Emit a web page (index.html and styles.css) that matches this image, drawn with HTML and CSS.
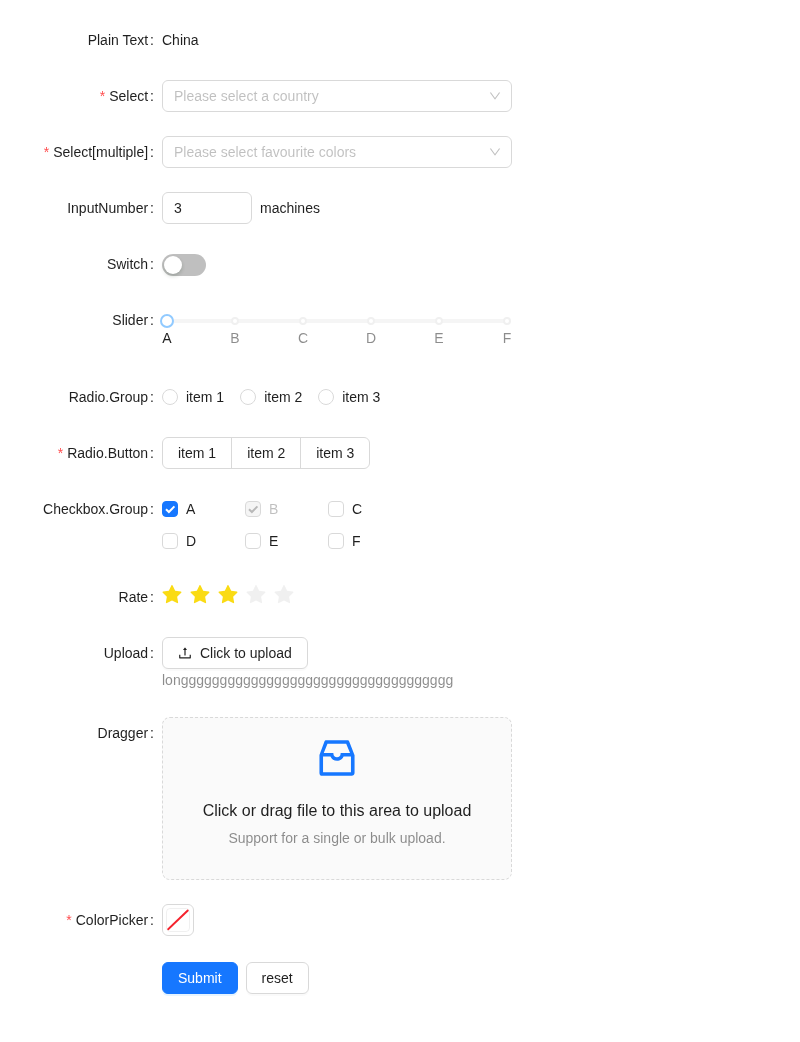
FILE: index.html
```html
<!DOCTYPE html>
<html lang="en">
<head>
<meta charset="utf-8">
<title>Form</title>
<link rel="stylesheet" href="styles.css">
</head>
<body>
<form class="form">
  <div class="row"><label class="label">Plain Text</label><div class="control"><span>China</span></div></div>

  <div class="row"><label class="label required">Select</label><div class="control">
    <div class="select"><span class="placeholder">Please select a country</span>
      <svg class="chev" viewBox="64 64 896 896"><path d="M884 256h-75c-5.1 0-9.9 2.5-12.9 6.6L512 654.2 227.9 262.6c-3-4.1-7.8-6.6-12.9-6.6h-75c-6.5 0-10.3 7.4-6.5 12.7l352.6 486.1c12.8 17.6 39 17.6 51.7 0l352.6-486.1c3.9-5.3.1-12.7-6.4-12.7z"/></svg></div>
  </div></div>

  <div class="row"><label class="label required">Select[multiple]</label><div class="control">
    <div class="select"><span class="placeholder">Please select favourite colors</span>
      <svg class="chev" viewBox="64 64 896 896"><path d="M884 256h-75c-5.1 0-9.9 2.5-12.9 6.6L512 654.2 227.9 262.6c-3-4.1-7.8-6.6-12.9-6.6h-75c-6.5 0-10.3 7.4-6.5 12.7l352.6 486.1c12.8 17.6 39 17.6 51.7 0l352.6-486.1c3.9-5.3.1-12.7-6.4-12.7z"/></svg></div>
  </div></div>

  <div class="row"><label class="label">InputNumber</label><div class="control gap8">
    <div class="number">3</div><span>machines</span>
  </div></div>

  <div class="row"><label class="label">Switch</label><div class="control">
    <div class="switch"><span class="knob"></span></div>
  </div></div>

  <div class="row slider-row"><label class="label">Slider</label><div class="control column">
    <div class="rail">
      <span class="handle"></span><span class="dot"></span><span class="dot"></span><span class="dot"></span><span class="dot"></span><span class="dot"></span>
    </div>
    <div class="marks">
      <span class="mark active">A</span><span class="mark">B</span><span class="mark">C</span><span class="mark">D</span><span class="mark">E</span><span class="mark">F</span>
    </div>
  </div></div>

  <div class="row"><label class="label">Radio.Group</label><div class="control">
    <span class="radio"><i></i><span>item 1</span></span>
    <span class="radio"><i></i><span>item 2</span></span>
    <span class="radio"><i></i><span>item 3</span></span>
  </div></div>

  <div class="row"><label class="label required">Radio.Button</label><div class="control">
    <div class="segment"><span>item 1</span><span>item 2</span><span>item 3</span></div>
  </div></div>

  <div class="row"><label class="label">Checkbox.Group</label><div class="control checks">
    <span class="check"><i class="box on"><svg viewBox="0 0 16 16"><path d="M4 8.2L6.9 11L12.4 5.4"/></svg></i><span>A</span></span>
    <span class="check disabled"><i class="box off"><svg viewBox="0 0 16 16"><path d="M4 8.2L6.9 11L12.4 5.4"/></svg></i><span>B</span></span>
    <span class="check"><i class="box"></i><span>C</span></span>
    <span class="check"><i class="box"></i><span>D</span></span>
    <span class="check"><i class="box"></i><span>E</span></span>
    <span class="check"><i class="box"></i><span>F</span></span>
  </div></div>

  <div class="row"><label class="label">Rate</label><div class="control rate">
    <svg class="star full" viewBox="64 64 896 896"><path d="M908.1 353.1l-253.9-36.9L540.7 86.1c-3.1-6.3-8.2-11.4-14.5-14.5-15.8-7.8-35-1.3-42.9 14.5L369.8 316.2l-253.9 36.9c-7 1-13.4 4.3-18.3 9.3a32.05 32.05 0 00.6 45.3l183.7 179.1-43.4 252.9a31.95 31.95 0 0046.4 33.7L512 754l227.1 119.4c6.2 3.3 13.4 4.4 20.3 3.2 17.4-3 29.1-19.5 26.1-36.9l-43.4-252.9 183.7-179.1c5-4.9 8.3-11.3 9.3-18.3 2.7-17.5-9.5-33.7-27-36.3z"/></svg>
    <svg class="star full" viewBox="64 64 896 896"><path d="M908.1 353.1l-253.9-36.9L540.7 86.1c-3.1-6.3-8.2-11.4-14.5-14.5-15.8-7.8-35-1.3-42.9 14.5L369.8 316.2l-253.9 36.9c-7 1-13.4 4.3-18.3 9.3a32.05 32.05 0 00.6 45.3l183.7 179.1-43.4 252.9a31.95 31.95 0 0046.4 33.7L512 754l227.1 119.4c6.2 3.3 13.4 4.4 20.3 3.2 17.4-3 29.1-19.5 26.1-36.9l-43.4-252.9 183.7-179.1c5-4.9 8.3-11.3 9.3-18.3 2.7-17.5-9.5-33.7-27-36.3z"/></svg>
    <svg class="star full" viewBox="64 64 896 896"><path d="M908.1 353.1l-253.9-36.9L540.7 86.1c-3.1-6.3-8.2-11.4-14.5-14.5-15.8-7.8-35-1.3-42.9 14.5L369.8 316.2l-253.9 36.9c-7 1-13.4 4.3-18.3 9.3a32.05 32.05 0 00.6 45.3l183.7 179.1-43.4 252.9a31.95 31.95 0 0046.4 33.7L512 754l227.1 119.4c6.2 3.3 13.4 4.4 20.3 3.2 17.4-3 29.1-19.5 26.1-36.9l-43.4-252.9 183.7-179.1c5-4.9 8.3-11.3 9.3-18.3 2.7-17.5-9.5-33.7-27-36.3z"/></svg>
    <svg class="star" viewBox="64 64 896 896"><path d="M908.1 353.1l-253.9-36.9L540.7 86.1c-3.1-6.3-8.2-11.4-14.5-14.5-15.8-7.8-35-1.3-42.9 14.5L369.8 316.2l-253.9 36.9c-7 1-13.4 4.3-18.3 9.3a32.05 32.05 0 00.6 45.3l183.7 179.1-43.4 252.9a31.95 31.95 0 0046.4 33.7L512 754l227.1 119.4c6.2 3.3 13.4 4.4 20.3 3.2 17.4-3 29.1-19.5 26.1-36.9l-43.4-252.9 183.7-179.1c5-4.9 8.3-11.3 9.3-18.3 2.7-17.5-9.5-33.7-27-36.3z"/></svg>
    <svg class="star" viewBox="64 64 896 896"><path d="M908.1 353.1l-253.9-36.9L540.7 86.1c-3.1-6.3-8.2-11.4-14.5-14.5-15.8-7.8-35-1.3-42.9 14.5L369.8 316.2l-253.9 36.9c-7 1-13.4 4.3-18.3 9.3a32.05 32.05 0 00.6 45.3l183.7 179.1-43.4 252.9a31.95 31.95 0 0046.4 33.7L512 754l227.1 119.4c6.2 3.3 13.4 4.4 20.3 3.2 17.4-3 29.1-19.5 26.1-36.9l-43.4-252.9 183.7-179.1c5-4.9 8.3-11.3 9.3-18.3 2.7-17.5-9.5-33.7-27-36.3z"/></svg>
  </div></div>

  <div class="row"><label class="label">Upload</label><div class="control column">
    <button type="button" class="btn upload"><svg class="upicon" viewBox="64 64 896 896"><path d="M400 317.7h73.9V656c0 4.4 3.6 8 8 8h60c4.4 0 8-3.6 8-8V317.7H624c6.7 0 10.4-7.7 6.3-12.9L518.3 163a8 8 0 00-12.6 0l-112 141.7c-4.1 5.3-.4 13 6.3 13zM878 626h-60c-4.4 0-8 3.6-8 8v154H214V634c0-4.4-3.6-8-8-8h-60c-4.4 0-8 3.6-8 8v198c0 17.7 14.3 32 32 32h684c17.7 0 32-14.3 32-32V634c0-4.4-3.6-8-8-8z"/></svg><span>Click to upload</span></button>
    <div class="extra">longgggggggggggggggggggggggggggggggggg</div>
  </div></div>

  <div class="row"><label class="label">Dragger</label><div class="control">
    <div class="dragger">
      <svg class="inbox" viewBox="0 0 1024 1024"><path d="M885.2 446.3l-.2-.8-112.2-285.1c-5-16.1-19.9-27.2-36.8-27.2H281.2c-17 0-32.1 11.3-36.9 27.6L139.4 443l-.3.7-.2.8c-1.3 4.9-1.7 9.9-1 14.8-.1 1.6-.2 3.2-.2 4.8V830a60.9 60.9 0 0060.8 60.8h627.2c33.5 0 60.8-27.3 60.9-60.8V464.1c0-1.3 0-2.6-.1-3.7.4-4.9 0-9.6-1.3-14.1zm-295.8-43l-.3 15.7c-.8 44.9-31.8 75.1-77.1 75.1-22.1 0-41.1-7.1-54.8-20.6S436 441.2 435.6 419l-.3-15.7H229.5L309 210h399.2l81.7 193.3H589.4zm-375 76.8h157.3c24.3 57.1 76 90.8 140.4 90.8 33.7 0 65-9.4 90.3-27.2 22.2-15.6 39.5-37.4 50.7-63.6h156.5V814H214.4V480.1z"/></svg>
      <p class="drag-text">Click or drag file to this area to upload</p>
      <p class="drag-hint">Support for a single or bulk upload.</p>
    </div>
  </div></div>

  <div class="row color-row"><label class="label required">ColorPicker</label><div class="control">
    <div class="picker"><div class="swatch"><svg viewBox="0 0 24 24"><path d="M1.3 22L23 1.3"/></svg></div></div>
  </div></div>

  <div class="row"><span class="label blank"></span><div class="control gap8">
    <button type="button" class="btn primary">Submit</button>
    <button type="button" class="btn">reset</button>
  </div></div>
</form>
</body>
</html>
```

FILE: styles.css
```css
* { box-sizing: border-box; }
html, body { margin: 0; background: #fff; }
body {
  font-family: "Liberation Sans", Arial, sans-serif;
  font-size: 14px;
  line-height: 22px;
  color: rgba(0, 0, 0, 0.88);
}
.form { padding-top: 24px; width: 512px; will-change: opacity; }
.row { display: flex; margin-bottom: 24px; min-height: 32px; }
.label {
  flex: 0 0 162px;
  height: 32px;
  display: flex;
  align-items: center;
  justify-content: flex-end;
}
.label.required::before {
  content: "*";
  color: #ff4d4f;
  margin-right: 4px;
}
.label::after { content: ":"; margin-left: 2px; margin-right: 8px; }
.label.blank::after { content: ""; }
.control { flex: 0 0 350px; min-height: 32px; display: flex; align-items: center; }
.gap8 { gap: 8px; }
.column { flex-direction: column; align-items: flex-start; }

.select {
  width: 350px; height: 32px; padding: 0 11px;
  border: 1px solid #d9d9d9; border-radius: 6px;
  display: flex; align-items: center; justify-content: space-between;
}
.placeholder { color: rgba(0, 0, 0, 0.25); }
.chev { width: 12px; height: 12px; margin-right: -1px; fill: rgba(0, 0, 0, 0.25); }

.number {
  width: 90px; height: 32px; padding: 0 11px;
  border: 1px solid #d9d9d9; border-radius: 6px;
  display: flex; align-items: center;
}

.switch { width: 44px; height: 22px; margin-top: 2px; border-radius: 11px; background: rgba(0, 0, 0, 0.25); padding: 2px; }
.knob { display: block; width: 18px; height: 18px; border-radius: 50%; background: #fff; box-shadow: 0 2px 4px rgba(0, 35, 11, 0.2); }

.slider-row { min-height: 53px; }
.rail {
  margin: 15px 5px 0; width: 340px; height: 4px; background: #f5f5f5; border-radius: 2px;
  display: flex; align-items: center; justify-content: space-between;
}
.dot { width: 8px; height: 8px; margin: 0 -4px; border-radius: 50%; background: #fff; border: 2px solid #f0f0f0; flex: none; }
.handle { width: 14px; height: 14px; margin: 0 -7px; border-radius: 50%; background: #fff; border: 2px solid #91caff; flex: none; position: relative; z-index: 1; }
.marks { width: 340px; margin: 4px 5px 0; display: flex; justify-content: space-between; }
.mark { width: 0; display: flex; justify-content: center; color: rgba(0, 0, 0, 0.45); }
.mark.active { color: rgba(0, 0, 0, 0.88); }

.radio { display: inline-flex; align-items: center; margin-right: 16px; }
.radio i { width: 16px; height: 16px; border: 1px solid #d9d9d9; border-radius: 50%; margin-right: 8px; }

.segment { display: flex; height: 32px; border: 1px solid #d9d9d9; border-radius: 6px; }
.segment span { padding: 0 15px; line-height: 30px; }
.segment span + span { border-left: 1px solid #d9d9d9; }

.checks { display: grid; grid-template-columns: repeat(3, 83px); grid-auto-rows: 32px; align-items: center; justify-content: start; }
.check { display: flex; align-items: center; gap: 8px; }
.box { width: 16px; height: 16px; border: 1px solid #d9d9d9; border-radius: 4px; display: block; flex: none; }
.box svg { display: block; width: 16px; height: 16px; margin: -1px; fill: none; stroke: #fff; stroke-width: 2; }
.box.on { background: #1677ff; border-color: #1677ff; }
.box.off { background: rgba(0, 0, 0, 0.04); }
.box.off svg { stroke: rgba(0, 0, 0, 0.25); }
.disabled { color: rgba(0, 0, 0, 0.25); }

.rate { gap: 8px; align-items: flex-start; padding-top: 4px; }
.star { width: 20px; height: 20px; fill: rgba(0, 0, 0, 0.06); }
.star.full { fill: #fadb14; }

.btn {
  font: inherit; height: 32px; padding: 0 15px; color: rgba(0, 0, 0, 0.88);
  background: #fff; border: 1px solid #d9d9d9; border-radius: 6px;
  box-shadow: 0 2px 0 rgba(0, 0, 0, 0.02);
}
.btn.primary { background: #1677ff; border-color: #1677ff; color: #fff; box-shadow: 0 2px 0 rgba(5, 145, 255, 0.1); }
.upload { display: inline-flex; align-items: center; gap: 8px; }
.upicon { width: 14px; height: 14px; fill: rgba(0, 0, 0, 0.88); }
.extra { height: 24px; line-height: 22px; color: rgba(0, 0, 0, 0.45); }

.dragger {
  width: 350px; height: 163px; padding: 16px 0; text-align: center;
  background: rgba(0, 0, 0, 0.02); border: 1px dashed #d9d9d9; border-radius: 8px;
}
.inbox { display: block; width: 48px; height: 48px; margin: 0 auto 17px; fill: #1677ff; }
.drag-text { margin: 0 0 4px; font-size: 16px; line-height: 24px; }
.drag-hint { margin: 0; color: rgba(0, 0, 0, 0.45); line-height: 22px; }

.color-row { margin-bottom: 26px; }
.picker { width: 32px; height: 32px; padding: 3px; border: 1px solid #d9d9d9; border-radius: 6px; }
.swatch { width: 24px; height: 24px; border: 1px solid rgba(0, 0, 0, 0.06); border-radius: 4px; overflow: hidden; }
.swatch svg { display: block; width: 24px; height: 24px; margin: -1px; fill: none; stroke: #f5222d; stroke-width: 2; }
```
